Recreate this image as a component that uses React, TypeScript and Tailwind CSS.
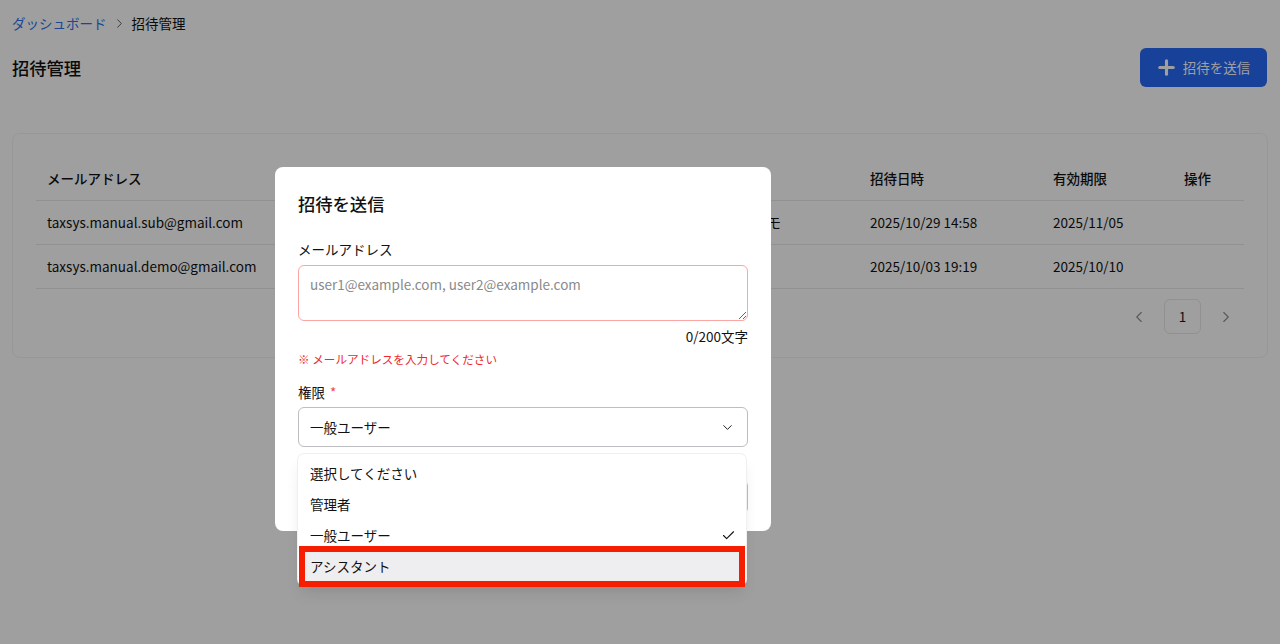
import React from 'react';
import { Check, ChevronDown, ChevronLeft, ChevronRight, Plus } from 'lucide-react';

const rows = [
  { email: 'taxsys.manual.sub@gmail.com', memo: 'デモ', sent: '2025/10/29 14:58', expires: '2025/11/05' },
  { email: 'taxsys.manual.demo@gmail.com', memo: '', sent: '2025/10/03 19:19', expires: '2025/10/10' },
];

const columns = 'grid grid-cols-[707px_116px_183px_131px_71px]';

const InviteTable: React.FC = () => (
  <div className="mt-[46px] h-[225px] rounded-lg border border-[#f3f3f3] bg-white px-[23px] pt-[22px]">
    <div className={`${columns} h-[44.5px] items-center border-b border-[#e8e8e8] pt-px font-medium`}>
      <div className="pl-[11px]">メールアドレス</div>
      <div />
      <div className="pl-[11px]">招待日時</div>
      <div className="pl-[11px]">有効期限</div>
      <div className="pl-[11px]">操作</div>
    </div>
    {rows.map(row => (
      <div key={row.email} className={`${columns} h-[44.25px] items-center border-b border-[#e8e8e8] pb-px`}>
        <div className="pl-[11px]">{row.email}</div>
        <div className="pl-[11px]">{row.memo}</div>
        <div className="pl-[11px]">{row.sent}</div>
        <div className="pl-[11px]">{row.expires}</div>
        <div />
      </div>
    ))}
    <div className="mt-[10px] flex items-center justify-end pr-[9px] text-[#8f8f8f]">
      <ChevronLeft size={18} strokeWidth={1.5} />
      <div className="mx-[16px] flex h-[35px] w-[37px] items-center justify-center rounded-md border border-[#e8e8e8] text-[#1a1a1a]">1</div>
      <ChevronRight size={18} strokeWidth={1.5} />
    </div>
  </div>
);

const RoleMenu: React.FC = () => (
  <div className="absolute left-[23px] top-[287px] z-10 h-[131px] w-[448px] rounded-md bg-white pt-[4px] shadow-lg ring-1 ring-[#f0f0f0]">
    <div className="flex h-[31px] items-center px-[12px]">選択してください</div>
    <div className="flex h-[31px] items-center px-[12px]">管理者</div>
    <div className="flex h-[31px] items-center justify-between pl-[12px] pr-[10px]">
      一般ユーザー
      <Check size={15} strokeWidth={1.75} />
    </div>
    <div className="mx-[2px] flex h-[31px] items-center rounded-sm bg-[#eeeef0] px-[10px]">アシスタント</div>
    {/* red annotation box drawn on top of the screenshot */}
    <div className="absolute left-px top-[92px] h-[41px] w-[446px] border-[6px] border-[#f51e00]" />
  </div>
);

const InviteModal: React.FC = () => (
  <div className="relative h-[364px] w-[496px] rounded-lg bg-white px-[23px] pt-[24px] text-[#111]">
    <h2 className="text-[17.3px] font-medium leading-[26px]">招待を送信</h2>
    <label className="mt-[22px] block leading-[20px]">メールアドレス</label>
    <textarea
      readOnly
      placeholder="user1@example.com, user2@example.com"
      className="mt-[6px] block h-[56px] w-full rounded-md border border-[#fca5a5] px-[11px] py-[8px] leading-[20px] outline-none placeholder:text-[#8a8a8a]"
    />
    <div className="mt-[5px] text-right leading-[20px]">0/200文字</div>
    <div className="mt-[4px] text-[11.6px] leading-[18px] text-[#f0282d]">※ メールアドレスを入力してください</div>
    <label className="mt-[14px] block leading-[20px]">
      権限 <span className="ml-[2px] text-[#ef4444]">*</span>
    </label>
    <div className="mt-[5px] flex h-[40px] items-center justify-between rounded-md border border-[#bdbdc2] pl-[11px] pr-[12px]">
      一般ユーザー
      <ChevronDown size={15} strokeWidth={1.5} />
    </div>
    {/* submit button, almost fully hidden by the open menu */}
    <div className="absolute right-[23px] top-[313px] h-[34px] w-[100px] rounded-md bg-[#a9c0f5]" />
    <RoleMenu />
  </div>
);

const App: React.FC = () => (
  <div className="relative h-[644px] overflow-hidden bg-[#ffffff] px-[12px] pt-[13px] text-[13.5px] text-[#111] font-['Noto_Sans_CJK_JP','Noto_Sans',sans-serif]">
    <nav className="flex h-[20px] items-center">
      <span className="text-[#2f6fed]">ダッシュボード</span>
      <ChevronRight size={15} strokeWidth={1.5} className="ml-[5px] mr-[5px] text-[#555]" />
      <span>招待管理</span>
    </nav>
    <div className="mt-[15px] flex h-[39px] items-center justify-between pr-px">
      <h1 className="text-[17.3px] font-medium">招待管理</h1>
      <button className="flex h-[39px] w-[127px] items-center justify-center gap-[5px] rounded-md bg-[#2769f5] pr-[2px] text-white">
        <Plus size={23} strokeWidth={3.25} />
        招待を送信
      </button>
    </div>
    <InviteTable />
    {/* dimmed backdrop with the dialog */}
    <div className="absolute inset-0 bg-black/37.5 pl-[275px] pt-[167px]">
      <InviteModal />
    </div>
  </div>
);

export default App;
